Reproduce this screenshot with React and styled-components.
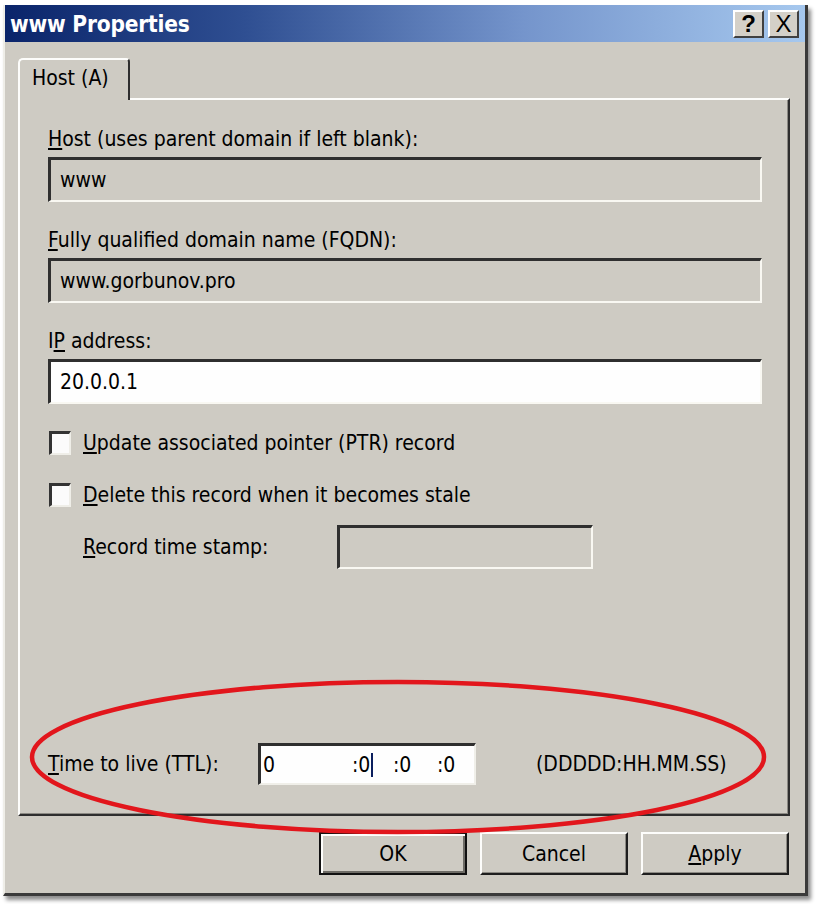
import styled, { createGlobalStyle } from 'styled-components';

const GlobalStyle = createGlobalStyle`
  html, body {
    margin: 0;
    padding: 0;
    background: #ffffff;
  }
  body {
    width: 816px;
    height: 904px;
    overflow: hidden;
    font-family: "DejaVu Sans Condensed", "DejaVu Sans", sans-serif;
    color: #000;
  }
`;

function App () {
  return (
    <>
      <GlobalStyle />
      <Window>
        <TitleBar>
          <Title>www Properties</Title>
          <TitleButtons>
            <CaptionButton $bold>?</CaptionButton>
            <CaptionButton>X</CaptionButton>
          </TitleButtons>
        </TitleBar>

        <Body>
          <TabStrip>
            <Tab>Host (A)</Tab>
          </TabStrip>

          <Panel>
            <Group>
              <Label><u>H</u>ost (uses parent domain if left blank):</Label>
              <Field>www</Field>
            </Group>
            <Group>
              <Label><u>F</u>ully qualified domain name (FQDN):</Label>
              <Field>www.gorbunov.pro</Field>
            </Group>
            <Group>
              <Label>I<u>P</u> address:</Label>
              <Field $white>20.0.0.1</Field>
            </Group>

            <CheckRow>
              <CheckBox />
              <CheckLabel><u>U</u>pdate associated pointer (PTR) record</CheckLabel>
            </CheckRow>
            <CheckRow>
              <CheckBox />
              <CheckLabel><u>D</u>elete this record when it becomes stale</CheckLabel>
            </CheckRow>

            <StampRow>
              <StampLabel><u>R</u>ecord time stamp:</StampLabel>
              <StampField />
            </StampRow>

            <TtlRow>
              <TtlLabel><u>T</u>ime to live (TTL):</TtlLabel>
              <TtlField>
                <Seg $w={89}>0</Seg>
                <Seg $w={41}>:0<Caret /></Seg>
                <Seg $w={44}>:0</Seg>
                <Seg>:0</Seg>
              </TtlField>
              <Format>(DDDDD:HH.MM.SS)</Format>
            </TtlRow>
          </Panel>

          <ButtonRow>
            <Button $default>OK</Button>
            <Button>Cancel</Button>
            <Button><u>A</u>pply</Button>
          </ButtonRow>
        </Body>

        <Marker viewBox="0 0 805 891" width="805" height="891">
          <ellipse cx="393" cy="752" rx="366" ry="75" fill="none" stroke="#e2161c" strokeWidth="4.5" />
        </Marker>
      </Window>
    </>
  )
}

export default App;

const Window = styled.div`
  position: relative;
  margin: 5px 0 0 3px;
  width: 805px;
  box-sizing: border-box;
  border-left: 2px solid #efeee8;
  border-right: 3px solid #3a3a3a;
  border-bottom: 3px solid #3a3a3a;
  background: #cecbc3;
  box-shadow: 3px 4px 4px rgba(0, 0, 0, 0.45);
  display: flex;
  flex-direction: column;
`;

const TitleBar = styled.div`
  height: 37px;
  display: flex;
  align-items: center;
  justify-content: space-between;
  padding: 0 6px 0 5px;
  background: linear-gradient(to right, #0a246a 0%, #2f4f92 30%, #7595cc 65%, #a6c8ee 100%);
`;

const Title = styled.div`
  color: #fff;
  font-weight: bold;
  font-size: 22.5px;
  letter-spacing: -0.2px;
`;

const TitleButtons = styled.div`
  display: flex;
  gap: 4px;
`;

const CaptionButton = styled.div`
  width: 31px;
  height: 28px;
  box-sizing: border-box;
  display: flex;
  align-items: center;
  justify-content: center;
  background: #d4d0c8;
  border: 2px solid;
  border-color: #fff #404040 #404040 #fff;
  font-family: "Liberation Sans", Arial, sans-serif;
  font-weight: ${p => (p.$bold ? 'bold' : 'normal')};
  font-size: 24px;
  line-height: 1;
`;

const Body = styled.div`
  padding: 16px 15px 18px 13px;
  display: flex;
  flex-direction: column;
`;

const TabStrip = styled.div`
  display: flex;
  position: relative;
  z-index: 1;
  margin-bottom: -2px;
`;

const Tab = styled.div`
  width: 112px;
  height: 42px;
  box-sizing: border-box;
  padding: 6px 0 0 12px;
  border-top: 2px solid #fdfdfb;
  border-left: 2px solid #fdfdfb;
  border-right: 2px solid #2e2e2e;
  border-radius: 5px 4px 0 0;
  background: #cecbc3;
  font-size: 21px;
  line-height: 24px;
`;

const Panel = styled.div`
  height: 718px;
  box-sizing: border-box;
  border: 2px solid;
  border-color: #fdfdfb #2e2e2e #2e2e2e #fdfdfb;
  box-shadow: inset -1px -1px 0 #8c8a84;
  padding: 27px 26px 29px 28px;
  display: flex;
  flex-direction: column;
`;

const Group = styled.div`
  display: flex;
  flex-direction: column;
  margin-bottom: 26px;
`;

const Label = styled.div`
  font-size: 21px;
  line-height: 24px;
  height: 24px;
  white-space: nowrap;
`;

const Field = styled.div`
  margin-top: 6px;
  height: 45px;
  box-sizing: border-box;
  border-style: solid;
  border-width: 3px 2px 2px 3px;
  border-color: #2f2f2f #f9f8f2 #f9f8f2 #2f2f2f;
  background: ${p => (p.$white ? '#fefefe' : '#cecbc3')};
  padding-left: 9px;
  display: flex;
  align-items: center;
  font-size: 21px;
`;

const CheckRow = styled.div`
  height: 26px;
  display: flex;
  align-items: center;
  margin-bottom: 26px;
`;

const CheckBox = styled.div`
  width: 22px;
  height: 24px;
  margin-left: 1px;
  box-sizing: border-box;
  border-style: solid;
  border-width: 3px 2px 2px 3px;
  border-color: #333 #efeee8 #efeee8 #333;
  background: #fbfbfb;
`;

const CheckLabel = styled.div`
  margin-left: 12px;
  font-size: 21px;
  white-space: nowrap;
`;

const StampRow = styled.div`
  display: flex;
  align-items: center;
  padding-left: 35px;
  margin-top: -9px;
`;

const StampLabel = styled.div`
  width: 254px;
  font-size: 21px;
  white-space: nowrap;
`;

const StampField = styled.div`
  width: 256px;
  height: 44px;
  box-sizing: border-box;
  border-style: solid;
  border-width: 3px 2px 2px 3px;
  border-color: #2f2f2f #f9f8f2 #f9f8f2 #2f2f2f;
`;

const TtlRow = styled.div`
  margin-top: auto;
  display: flex;
  align-items: center;
`;

const TtlLabel = styled.div`
  width: 210px;
  font-size: 21px;
  white-space: nowrap;
`;

const TtlField = styled.div`
  width: 218px;
  height: 42px;
  box-sizing: border-box;
  border-style: solid;
  border-width: 3px 2px 2px 3px;
  border-color: #2f2f2f #f0efe9 #f0efe9 #2f2f2f;
  background: #fefefe;
  padding-left: 2px;
  display: flex;
  align-items: center;
  font-size: 21px;
`;

const Seg = styled.span`
  display: inline-flex;
  align-items: center;
  width: ${p => (p.$w ? `${p.$w}px` : 'auto')};
`;

const Caret = styled.span`
  display: inline-block;
  width: 2px;
  height: 24px;
  margin-left: 1px;
  background: #0b1f5e;
`;

const Format = styled.div`
  margin-left: 60px;
  font-size: 21px;
  white-space: nowrap;
`;

const ButtonRow = styled.div`
  display: flex;
  justify-content: flex-end;
  gap: 13px;
  margin-top: 16px;
  padding-right: 1px;
`;

const Button = styled.div`
  width: 148px;
  height: 43px;
  box-sizing: border-box;
  display: flex;
  align-items: center;
  justify-content: center;
  border: 2px solid;
  border-color: ${p => (p.$default ? '#111' : '#fdfdfb #1e1e1e #1e1e1e #fdfdfb')};
  box-shadow: ${p => (p.$default
    ? 'inset 2px 2px 0 #fdfdfb, inset -2px -2px 0 #6e6c66'
    : 'inset -1px -1px 0 #8c8a84')};
  font-size: 21px;
`;

const Marker = styled.svg`
  position: absolute;
  left: 0;
  top: 0;
  pointer-events: none;
  z-index: 5;
`;
